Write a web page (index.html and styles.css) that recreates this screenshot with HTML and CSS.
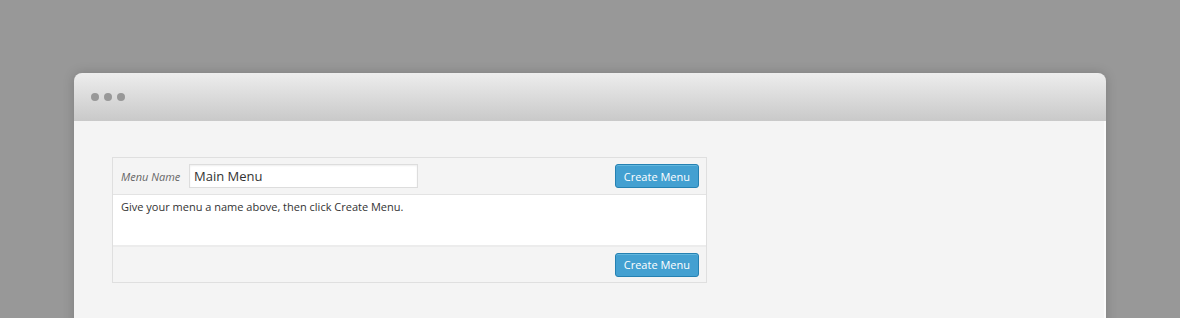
FILE: index.html
```html
<!DOCTYPE html>
<html>
<head>
<meta charset="utf-8">
<link rel="stylesheet" href="styles.css">
</head>
<body>
<div class="window">
  <div class="titlebar">
    <span class="dot"></span><span class="dot"></span><span class="dot"></span>
  </div>
  <div class="content">
    <div class="panel">
      <div class="panel-header">
        <label class="label">Menu Name</label>
        <input class="name-input" type="text" value="Main Menu">
        <button class="btn">Create Menu</button>
      </div>
      <div class="panel-body">Give your menu a name above, then click Create Menu.</div>
      <div class="panel-footer">
        <button class="btn">Create Menu</button>
      </div>
    </div>
  </div>
</div>
</body>
</html>
```
FILE: styles.css
```css
html, body {
  margin: 0;
  padding: 0;
  background: #989898;
  height: 318px;
  overflow: hidden;
  font-family: "Open Sans", "Liberation Sans", sans-serif;
}
.window {
  margin: 73px 0 0 74px;
  width: 1032px;
  height: 300px;
  border-radius: 8px 8px 0 0;
  box-shadow: 0 0 12px rgba(0,0,0,0.18);
  overflow: hidden;
  display: flex;
  flex-direction: column;
}
.titlebar {
  height: 48px;
  flex: none;
  background: linear-gradient(#ededed, #c9c9c9);
  display: flex;
  align-items: center;
  gap: 5px;
  padding-left: 17px;
}
.dot {
  width: 8px;
  height: 8px;
  border-radius: 50%;
  background: #989898;
}
.content {
  flex: 1;
  background: #f4f4f4;
  border-right: 2px solid #fbfbfb;
  padding: 36px 0 0 38px;
}
.panel {
  width: 593px;
  border: 1px solid #dfdfdf;
}
.panel-header {
  height: 37px;
  box-sizing: border-box;
  display: flex;
  align-items: center;
  padding: 0 7px 0 8px;
  background: #f4f4f4;
  border-bottom: 1px solid #e3e3e3;
}
.label {
  font-style: italic;
  font-size: 11px;
  color: #666;
  width: 68px;
}
.name-input {
  width: 229px;
  height: 24px;
  box-sizing: border-box;
  border: 1px solid #dddddd;
  box-shadow: inset 0 1px 2px rgba(0,0,0,0.07);
  padding: 0 4px;
  font-family: inherit;
  font-size: 13px;
  color: #333;
  background: #fff;
  outline: none;
}
.btn {
  margin-left: auto;
  height: 24px;
  padding: 0 8px;
  background: #43a0d1;
  border: 1px solid #2581b2;
  border-radius: 3px;
  box-shadow: inset 0 1px 0 rgba(130,205,235,0.5);
  color: #fff;
  font-family: inherit;
  font-size: 11px;
}
.panel-body {
  background: #fff;
  height: 52px;
  box-sizing: border-box;
  padding: 4px 8px;
  font-size: 11px;
  color: #333;
  border-bottom: 2px solid #ececec;
}
.panel-footer {
  height: 35px;
  box-sizing: border-box;
  display: flex;
  align-items: center;
  padding: 0 7px 0 8px;
  background: #f4f4f4;
}
```
